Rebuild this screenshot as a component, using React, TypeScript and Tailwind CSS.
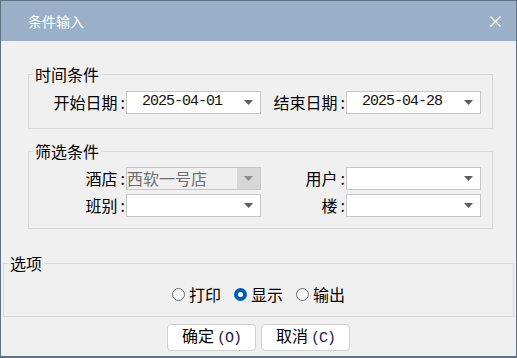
import React, { useState } from 'react';

const cjk = "font-['Noto_Sans_CJK_SC','Noto_Sans',sans-serif]";
const mono = "font-['Liberation_Mono','DejaVu_Sans_Mono',monospace]";

const Arrow = ({ dim }: { dim?: boolean }) => (
  <svg width="9" height="5" viewBox="0 0 9 5" className="shrink-0">
    <polygon points="0,0 9,0 4.5,5" fill={dim ? '#8c8c8c' : '#59605a'} />
  </svg>
);

const Combo = ({ value, disabled }: { value?: string; disabled?: boolean }) => {
  if (disabled) {
    return (
      <div className="w-[135px] h-[23px] border border-[#c6c6c6] bg-[#f0f0f0] flex items-stretch">
        <span className={`flex-1 text-[16px] leading-[21px] text-[#6e6e6e] ${cjk}`}>{value}</span>
        <span className="w-[23px] bg-[#d7d7d7] flex items-center justify-center">
          <Arrow dim />
        </span>
      </div>
    );
  }
  return (
    <div className="w-[135px] h-[23px] border border-[#c6c6c6] bg-white flex items-center pl-[15px] pr-[7px]">
      <span className={`flex-1 text-[15px] tracking-[-1px] text-[#111] ${mono}`}>{value}</span>
      <Arrow />
    </div>
  );
};

const Label = ({ text, w }: { text: string; w: string }) => (
  <span className={`${w} text-right pr-[1px] text-[16px] leading-[23px] text-black ${cjk}`}>
    {text}
    <span className="pl-[3px]">:</span>
  </span>
);

const Radio = ({ label, checked, onClick }: { label: string; checked: boolean; onClick: () => void }) => (
  <button onClick={onClick} className="flex items-center gap-[4px]">
    {checked ? (
      <span className="w-[13px] h-[13px] rounded-full bg-[#005fb8] flex items-center justify-center">
        <span className="w-[5px] h-[5px] rounded-full bg-white" />
      </span>
    ) : (
      <span className="w-[13px] h-[13px] rounded-full border border-[#6f6f6f] bg-[#f6f6f6]" />
    )}
    <span className={`text-[16px] leading-[22px] text-black ${cjk}`}>{label}</span>
  </button>
);

const Btn = ({ text, key2 }: { text: string; key2: string }) => (
  <button className="w-[89px] h-[27px] rounded-[4px] border border-[#cfcfcf] bg-white flex items-center justify-center">
    <span className="flex items-baseline">
      <span className={`text-[16px] leading-[22px] text-black ${cjk}`}>{text}</span>
      <span className={`ml-[3px] text-[15px] tracking-[-1px] text-[#1a2050] ${mono}`}>({key2})</span>
    </span>
  </button>
);

export default function App() {
  const [mode, setMode] = useState('显示');

  return (
    <div className="w-[517px] h-[358px] overflow-hidden border border-b-2 border-[#5e7286] bg-[#f0f0f0] flex flex-col">
      <div className="h-[40px] shrink-0 bg-[#99b0c8] flex items-center justify-between pl-[27px] pr-[15px]">
        <span className={`text-[14px] text-white ${cjk}`}>条件输入</span>
        <svg width="11" height="11" viewBox="0 0 11 11">
          <path d="M0.5 0.5 L10.5 10.5 M10.5 0.5 L0.5 10.5" stroke="white" strokeWidth="1.2" />
        </svg>
      </div>

      <fieldset className="mt-[22px] ml-[27px] w-[465px] border border-[#d8d8d8] p-0">
        <legend className={`ml-[4px] px-[2px] text-[16px] leading-[22px] text-black ${cjk}`}>时间条件</legend>
        <div className="pt-[6px] pb-[14px] flex items-center">
          <Label text="开始日期" w="w-[97px]" />
          <Combo value="2025-04-01" />
          <Label text="结束日期" w="w-[85px]" />
          <Combo value="2025-04-28" />
        </div>
      </fieldset>

      <fieldset className="mt-[11px] ml-[27px] w-[465px] border border-[#d8d8d8] p-0">
        <legend className={`ml-[4px] px-[2px] text-[16px] leading-[22px] text-black ${cjk}`}>筛选条件</legend>
        <div className="pt-[5px] pb-[11px] flex flex-col gap-[4px]">
          <div className="flex items-center">
            <Label text="酒店" w="w-[97px]" />
            <Combo value="西软一号店" disabled />
            <Label text="用户" w="w-[85px]" />
            <Combo />
          </div>
          <div className="flex items-center">
            <Label text="班别" w="w-[97px]" />
            <Combo />
            <Label text="楼" w="w-[85px]" />
            <Combo />
          </div>
        </div>
      </fieldset>

      <fieldset className="mt-[23px] ml-[2px] w-[511px] border border-[#d8d8d8] p-0">
        <legend className={`ml-[4px] px-[2px] text-[16px] leading-[22px] text-black ${cjk}`}>选项</legend>
        <div className="pt-[9px] pb-[11px] flex justify-center gap-[13px]">
          {['打印', '显示', '输出'].map((m) => (
            <Radio key={m} label={m} checked={mode === m} onClick={() => setMode(m)} />
          ))}
        </div>
      </fieldset>

      <div className="mt-[7px] flex justify-center gap-[5px]">
        <Btn text="确定" key2="O" />
        <Btn text="取消" key2="C" />
      </div>
    </div>
  );
}
